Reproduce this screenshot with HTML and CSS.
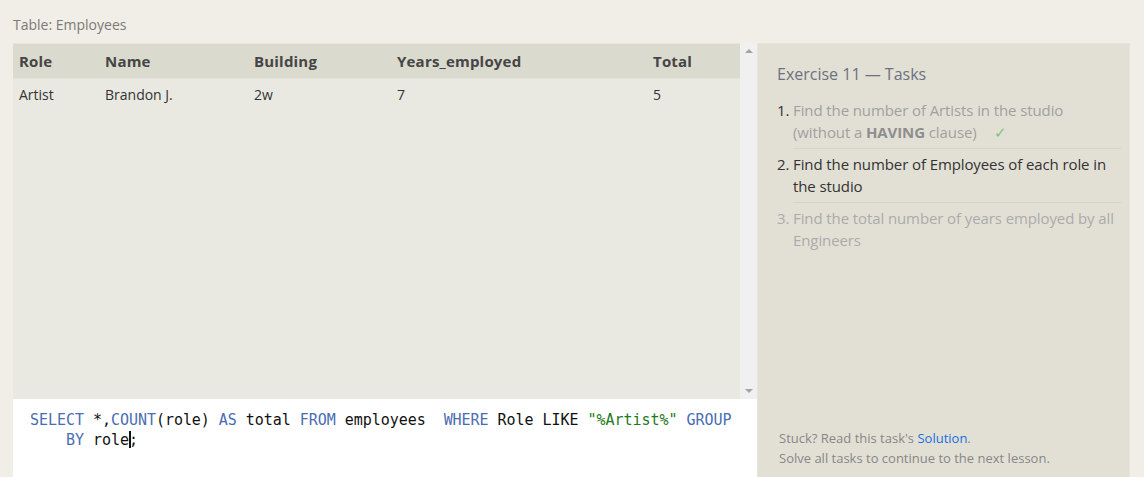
FILE: index.html
```html
<!DOCTYPE html>
<html>
<head>
<meta charset="utf-8">
<link rel="stylesheet" href="styles.css">
</head>
<body>
<div class="page">
  <div class="caption">Table: Employees</div>
  <div class="main">
    <div class="left">
      <div class="results">
        <div class="table-wrap">
          <table class="grid">
            <colgroup>
              <col class="c1"><col class="c2"><col class="c3"><col class="c4"><col class="c5">
            </colgroup>
            <thead>
              <tr><th>Role</th><th>Name</th><th>Building</th><th>Years_employed</th><th>Total</th></tr>
            </thead>
            <tbody>
              <tr><td>Artist</td><td>Brandon J.</td><td>2w</td><td>7</td><td>5</td></tr>
            </tbody>
          </table>
        </div>
        <div class="scrollbar">
          <span class="arrow up"></span>
          <span class="arrow down"></span>
        </div>
      </div>
      <div class="editor">
        <div class="code"><span class="kw">SELECT</span> *,<span class="kw">COUNT</span>(role) <span class="kw">AS</span> total <span class="kw">FROM</span> employees  <span class="kw">WHERE</span> Role LIKE <span class="str">"%Artist%"</span> <span class="kw">GROUP</span></div>
        <div class="code indent"><span class="kw">BY</span> role<span class="cursor"></span>;</div>
      </div>
    </div>
    <div class="right">
      <div class="ex-title">Exercise 11 — Tasks</div>
      <ol class="tasks">
        <li class="task done"><span class="num">1.</span><div class="txt"><span>Find the number of Artists in the studio </span><span>(without a </span><b>HAVING</b><span> clause)</span><span class="check">✓</span></div></li>
        <li class="task current"><span class="num">2.</span><div class="txt">Find the number of Employees of each role in the studio</div></li>
        <li class="task todo"><span class="num">3.</span><div class="txt">Find the total number of years employed by all Engineers</div></li>
      </ol>
      <div class="spacer"></div>
      <div class="help">
        <div>Stuck? Read this task's <a class="link">Solution</a>.</div>
        <div>Solve all tasks to continue to the next lesson.</div>
      </div>
    </div>
  </div>
</div>
</body>
</html>
```

FILE: styles.css
```css
html, body {
  margin: 0;
  padding: 0;
  background: #f0eee6;
  overflow: hidden;
}
body {
  font-family: "Open Sans", "Noto Sans", sans-serif;
  width: 1144px;
  height: 477px;
}
.page {
  padding: 15px 14px 0 13px;
}
.caption {
  font-size: 14px;
  color: #7a7a7a;
  height: 28px;
  line-height: 20px;
}
.main {
  display: flex;
  height: 440px;
}
.left {
  width: 744px;
  display: flex;
  flex-direction: column;
}
.results {
  height: 356px;
  display: flex;
  background: #eae9e1;
}
.table-wrap {
  flex: 1;
  border-top: 1px solid #e6e5dc;
}
.grid {
  border-collapse: collapse;
  table-layout: fixed;
  width: 727px;
  font-size: 14px;
}
.c1 { width: 86px; }
.c2 { width: 149px; }
.c3 { width: 143px; }
.c4 { width: 256px; }
.c5 { width: 93px; }
.grid th {
  background: #dadace;
  color: #454545;
  font-weight: 700;
  text-align: left;
  height: 34px;
  padding: 0 6px;
  letter-spacing: 0.2px;
  font-size: 15px;
}
.grid td {
  color: #333;
  height: 31px;
  padding: 0 6px;
  border-top: 1px solid #e4e3da;
}
.scrollbar {
  width: 17px;
  background: #f0f0f0;
  display: flex;
  flex-direction: column;
  justify-content: space-between;
  align-items: center;
  padding: 6px 0;
}
.arrow {
  width: 0;
  height: 0;
  border-left: 4px solid transparent;
  border-right: 4px solid transparent;
}
.arrow.up { border-bottom: 4px solid #a3a3a3; }
.arrow.down { border-top: 4px solid #a3a3a3; }
.editor {
  flex: 1;
  background: #fff;
  padding: 11px 0 0 17px;
  font-family: "DejaVu Sans Mono", "Liberation Mono", monospace;
  font-size: 15px;
  color: #111;
}
.code {
  line-height: 20px;
  white-space: pre;
  letter-spacing: -0.04px;
}
.code.indent {
  padding-left: 36px;
}
.kw { color: #4a6db3; }
.str { color: #1d7a1d; }
.cursor {
  display: inline-block;
  width: 2px;
  height: 17px;
  background: #111;
  vertical-align: -3px;
  margin-right: -2px;
}
.right {
  width: 373px;
  background: #e2e0d5;
  border: 1px solid #e6e4db;
  border-bottom: 0;
  box-sizing: border-box;
  padding: 19px 8px 0 19px;
  display: flex;
  flex-direction: column;
}
.ex-title {
  font-size: 16px;
  color: #6d7180;
  line-height: 22px;
  margin-bottom: 14px;
}
.tasks {
  list-style: none;
  margin: 0;
  padding: 0;
  font-size: 15px;
  line-height: 22px;
  letter-spacing: -0.1px;
}
.task {
  display: flex;
  margin-bottom: 4px;
}
.num {
  width: 16px;
  flex: none;
  color: #333;
}
.txt {
  flex: 1;
  border-bottom: 1px solid #d6d4c9;
  padding-bottom: 5px;
}
.task.done .txt { color: #a0a0a0; }
.task.done b { color: #8e8e8e; }
.task.current .txt { color: #333; }
.task.todo .num, .task.todo .txt { color: #ababab; }
.task.todo .txt { border-bottom: 0; }
.check {
  color: #7dc27d;
  margin-left: 17px;
}
.spacer { flex: 1; }
.help {
  font-size: 13px;
  color: #878787;
  line-height: 20px;
  padding: 0 0 15px 2px;
}
.link { color: #1a6fe0; }
```
